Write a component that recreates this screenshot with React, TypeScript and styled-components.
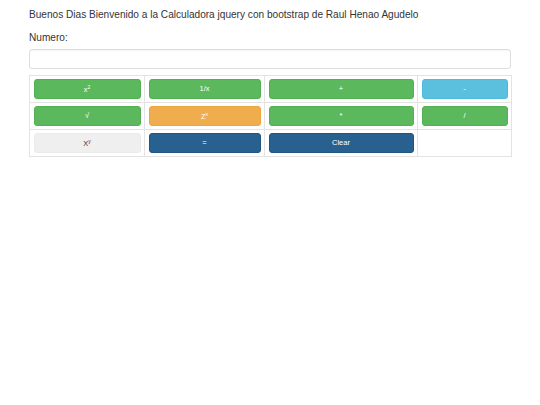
import React from 'react';
import styled, { createGlobalStyle } from 'styled-components';

const GlobalStyle = createGlobalStyle`
  html, body {
    margin: 0;
    padding: 0;
    background: #fff;
  }
  body {
    font-family: "Liberation Sans", Arial, sans-serif;
    color: #333;
  }
`;

type Variant = 'success' | 'warning' | 'info' | 'primary' | 'default';

const palette: Record<Variant, { bg: string; border: string; text: string }> = {
  success: { bg: '#5cb85c', border: '#52b052', text: '#fff' },
  warning: { bg: '#f0ad4e', border: '#eea63e', text: '#fff' },
  info: { bg: '#5bc0de', border: '#4fbadb', text: '#fff' },
  primary: { bg: '#286090', border: '#225682', text: '#fff' },
  default: { bg: '#efefef', border: '#ebebeb', text: '#333' },
};

const Page = styled.div`
  padding: 7px 29px 0 29px;
  width: 482px;
`;

const Title = styled.p`
  margin: 0;
  font-size: 10.1px;
  line-height: 16px;
`;

const Label = styled.label`
  display: block;
  margin-top: 7px;
  font-size: 10.1px;
  line-height: 16px;
`;

const Input = styled.input`
  display: block;
  box-sizing: border-box;
  width: 482px;
  height: 20px;
  margin-top: 3px;
  border: 1px solid #ddd;
  border-radius: 3px;
  box-shadow: inset 0 1px 1px rgba(0, 0, 0, 0.04);
  padding: 0 6px;
  font-size: 10px;
  outline: none;
`;

const Table = styled.table`
  margin-top: 6px;
  width: 482px;
  border-collapse: collapse;
  table-layout: fixed;
  border: 1px solid #e3e3e3;
`;

const Cell = styled.td`
  border: 1px solid #e3e3e3;
  padding: 3px 3.5px;
  height: 20px;
`;

const Btn = styled.button<{ $variant: Variant }>`
  display: block;
  width: 100%;
  height: 20px;
  box-sizing: border-box;
  border: 1px solid ${(p) => palette[p.$variant].border};
  border-radius: 3px;
  background: ${(p) => palette[p.$variant].bg};
  color: ${(p) => palette[p.$variant].text};
  font-family: "Liberation Sans", Arial, sans-serif;
  font-size: 7.5px;
  line-height: 1;
  padding: 0;
  cursor: pointer;

  sup {
    font-size: 5px;
    vertical-align: 3px;
  }
`;

const cols = [115, 120, 153, 94];

const rows: { label: React.ReactNode; variant: Variant }[][] = [
  [
    { label: <>x<sup>2</sup></>, variant: 'success' },
    { label: '1/x', variant: 'success' },
    { label: '+', variant: 'success' },
    { label: '-', variant: 'info' },
  ],
  [
    { label: '√', variant: 'success' },
    { label: <>Z<sup>x</sup></>, variant: 'warning' },
    { label: '*', variant: 'success' },
    { label: '/', variant: 'success' },
  ],
  [
    { label: <>X<sup>y</sup></>, variant: 'default' },
    { label: '=', variant: 'primary' },
    { label: 'Clear', variant: 'primary' },
  ],
];

export default function App() {
  return (
    <Page>
      <GlobalStyle />
      <Title>Buenos Dias Bienvenido a la Calculadora jquery con bootstrap de Raul Henao Agudelo</Title>
      <Label htmlFor="numero">Numero:</Label>
      <Input id="numero" type="text" />
      <Table>
        <colgroup>
          {cols.map((w, i) => (
            <col key={i} style={{ width: w }} />
          ))}
        </colgroup>
        <tbody>
          {rows.map((row, r) => (
            <tr key={r}>
              {cols.map((_, c) => (
                <Cell key={c}>
                  {row[c] ? <Btn $variant={row[c].variant}>{row[c].label}</Btn> : null}
                </Cell>
              ))}
            </tr>
          ))}
        </tbody>
      </Table>
    </Page>
  );
}
